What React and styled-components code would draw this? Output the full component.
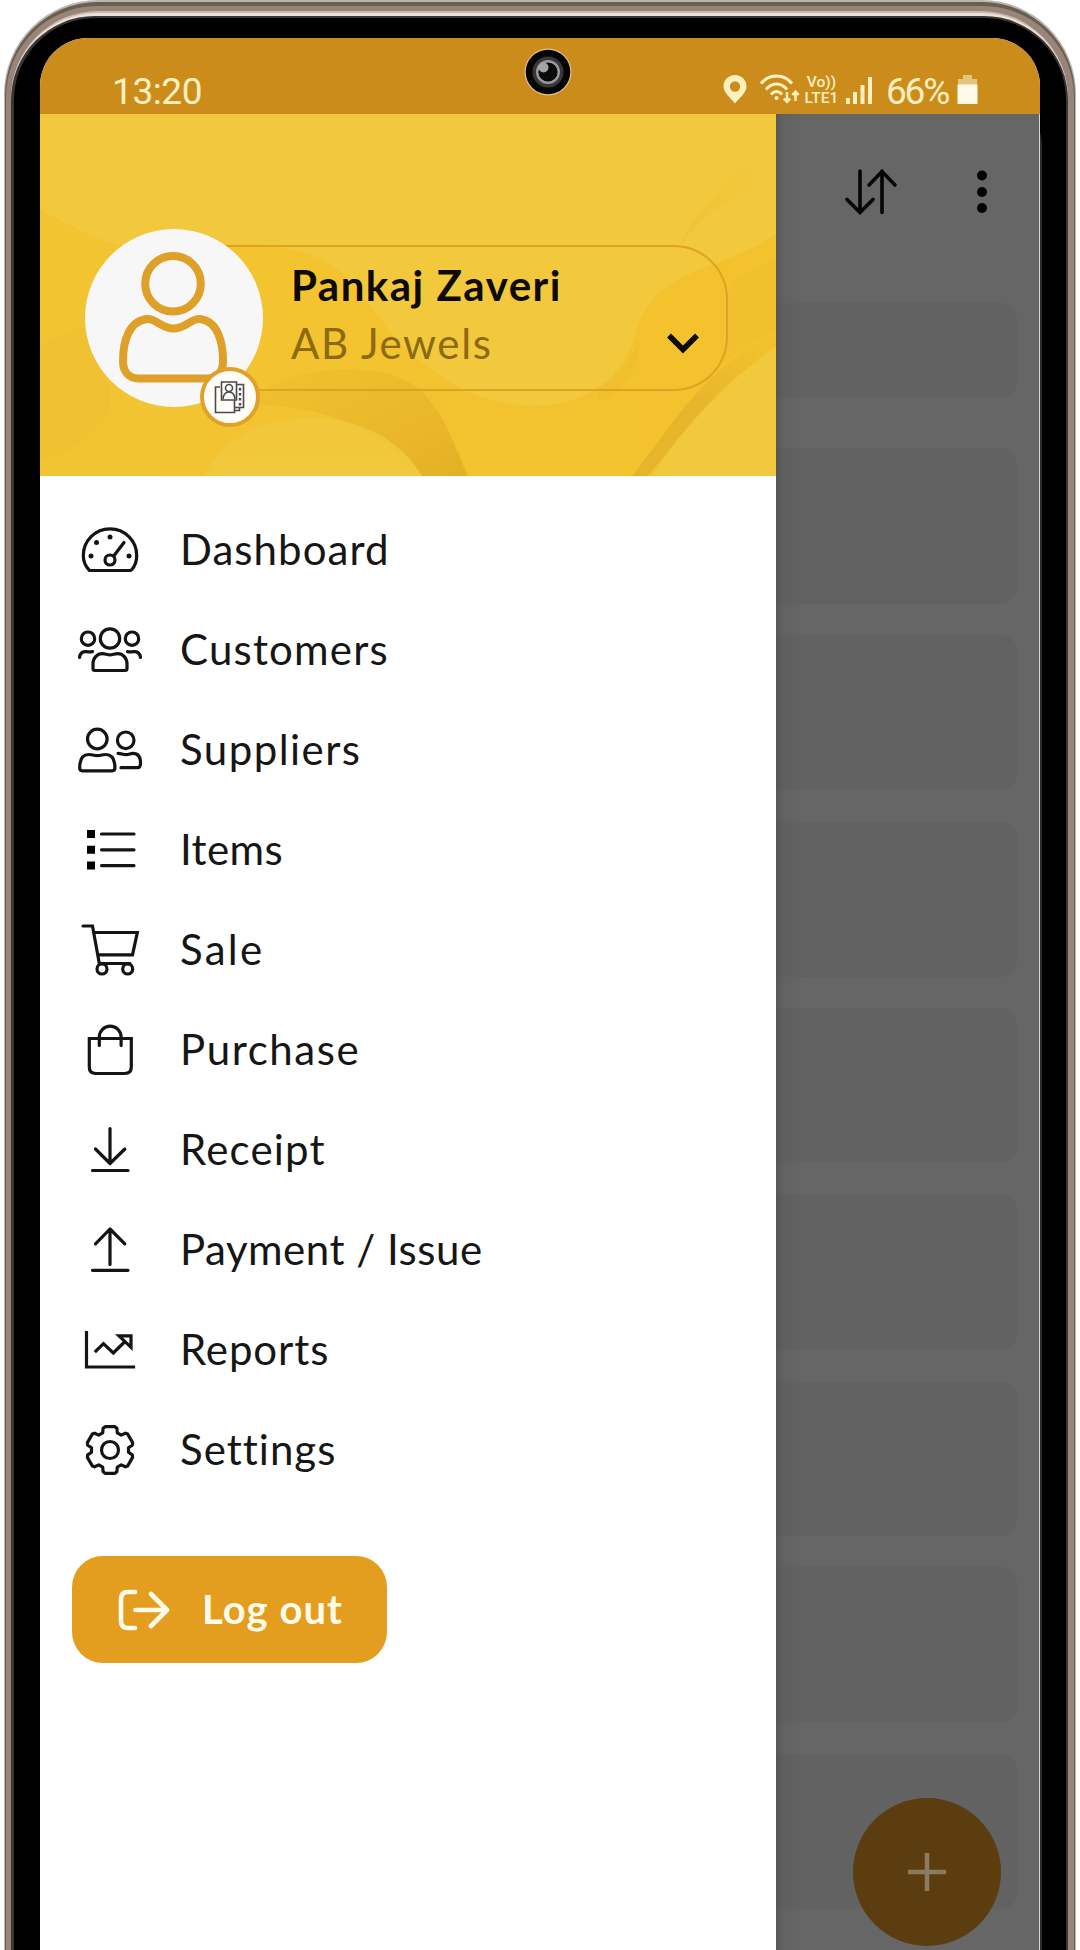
import React from 'react';
import styled, { createGlobalStyle } from 'styled-components';

const GlobalStyle = createGlobalStyle`
  * { box-sizing: border-box; }
  html, body { margin: 0; background: #fff; }
  body { width: 1080px; height: 1950px; overflow: hidden; }
`;

const Page = styled.div`
  width: 1080px;
  height: 1950px;
  padding: 0 4px;
  overflow: hidden;
  font-family: Lato, 'Open Sans', sans-serif;
`;

const Ring = styled.div`
  height: 100%;
  background: ${(p) => p.$tone};
  padding: ${(p) => p.$pad};
  border-radius: ${(p) => p.$radius}px ${(p) => p.$radius}px 0 0;
`;

const Screen = styled.div`
  position: relative;
  display: flex;
  flex-direction: column;
  height: 100%;
  overflow: hidden;
  background: #fff;
  border-radius: 48px 48px 0 0;
  box-shadow: 2px 60px 0 0 #2e2e2e;
`;

const StatusBar = styled.header`
  flex: none;
  display: flex;
  justify-content: space-between;
  height: 76px;
  padding: 34px 62px 0 72px;
  background: #cc8c1c;
  color: #fff0c0;
  font-family: Roboto, sans-serif;
`;

const Clock = styled.span`
  font-size: 37px;
  line-height: 40px;
  letter-spacing: -0.4px;
`;

const StatusIcons = styled.div`
  display: flex;
  align-items: flex-start;
`;

const StatusGlyph = styled.svg`
  display: block;
  flex: none;
  margin-right: ${(p) => p.$gap || 0}px;
`;

const Network = styled.div`
  display: flex;
  flex-direction: column;
  align-items: center;
  width: 37px;
  margin: 2px 6px 0 3px;
  font-size: 15.5px;
  font-weight: 500;
  line-height: 16px;
  letter-spacing: 0.1px;
  white-space: nowrap;
`;

const Charge = styled.span`
  width: 72px;
  padding-left: 1px;
  font-size: 37px;
  line-height: 40px;
  letter-spacing: -2.2px;
`;

const Camera = styled.svg`
  position: absolute;
  left: 483px;
  top: 9px;
`;

const Body = styled.div`
  flex: 1;
  display: flex;
  min-height: 0;
`;

const Drawer = styled.nav`
  flex: none;
  width: 736px;
  background: #fff;
`;

const Profile = styled.section`
  position: relative;
  height: 362px;
  padding: 115px 0 0 45px;
  background: #f2c83c;
`;

const Waves = styled.svg`
  position: absolute;
  inset: 0;
`;

const ProfileRow = styled.div`
  position: relative;
  display: flex;
  align-items: flex-start;
`;

const Avatar = styled.div`
  position: relative;
  z-index: 1;
  flex: none;
  width: 178px;
  height: 178px;
  border-radius: 50%;
  background: #f7f7f7;
`;

const Badge = styled.div`
  position: absolute;
  left: 115px;
  top: 138px;
  display: flex;
  align-items: center;
  justify-content: center;
  width: 60px;
  height: 60px;
  border: 4px solid #e2a02a;
  border-radius: 50%;
  background: #fffdf8;
`;

const Account = styled.div`
  display: flex;
  align-items: flex-start;
  justify-content: space-between;
  width: 554px;
  height: 146px;
  margin: 16px 0 0 -89px;
  padding: 14px 26px 0 117px;
  border: 2px solid #dea324;
  border-left: 0;
  border-radius: 0 54px 54px 0;
`;

const UserName = styled.div`
  height: 48px;
  color: #0d0a06;
  font-size: 42px;
  font-weight: 700;
  line-height: 48px;
  letter-spacing: 1.5px;
  white-space: nowrap;
`;

const Company = styled.div`
  margin-top: 10px;
  color: #8c6a12;
  font-size: 42px;
  line-height: 48px;
  letter-spacing: 1.6px;
  white-space: nowrap;
`;

const Chevron = styled.svg`
  flex: none;
  margin-top: 64px;
`;

const Menu = styled.ul`
  margin: 0;
  padding: 24px 0 0 30px;
  list-style: none;
`;

const MenuItem = styled.li`
  display: flex;
  align-items: center;
  gap: 30px;
  height: 100px;
`;

const MenuIcon = styled.svg`
  flex: none;
  display: block;
  fill: none;
  stroke: #141414;
  stroke-width: 3.2;
  stroke-linecap: round;
  stroke-linejoin: round;
`;

const MenuLabel = styled.span`
  padding-bottom: 3px;
  color: #161616;
  font-size: 42px;
  line-height: 50px;
  letter-spacing: ${(p) => p.$track}px;
  white-space: nowrap;
`;

const Logout = styled.button`
  display: flex;
  align-items: center;
  gap: 32px;
  width: 315px;
  height: 107px;
  margin: 56px 0 0 32px;
  padding: 0 0 0 45px;
  border: 0;
  border-radius: 31px;
  background: #e49e1f;
  color: #fffbea;
  font-family: inherit;
  font-size: 40px;
  font-weight: 700;
  letter-spacing: 1px;

  span {
    padding-bottom: 2px;
  }
`;

const Backdrop = styled.main`
  position: relative;
  flex: 1;
  background: linear-gradient(90deg, #585858 0, #626262 8px, #666 28px);
  border-right: 1px solid #d6d6d6;
`;

const Toolbar = styled.div`
  display: flex;
  align-items: center;
  justify-content: space-between;
  height: 189px;
  padding: 0 47px 34px 68px;
`;

const Cards = styled.div`
  display: flex;
  flex-direction: column;
  gap: 31px;
`;

const Card = styled.div`
  flex: none;
  width: 241px;
  height: ${(p) => p.$height}px;
  margin-bottom: ${(p) => p.$after || 0}px;
  border-radius: 0 16px 16px 0;
  background: linear-gradient(90deg, #565656 0, #5f5f5f 8px, #626262 28px);
`;

const AddButton = styled.button`
  position: absolute;
  left: 77px;
  top: 1684px;
  display: flex;
  align-items: center;
  justify-content: center;
  width: 148px;
  height: 148px;
  padding: 0;
  border: 0;
  border-radius: 50%;
  background: #5c3d0f;
`;

const rad = (deg) => (deg * Math.PI) / 180;
const gearPath = () => {
  const pts = [];
  for (let k = 0; k < 6; k += 1) {
    const a = -90 + 60 * k;
    [[-23, 18.6], [-17.5, 22.8], [-12, 23.8], [12, 23.8], [17.5, 22.8], [23, 18.6]].forEach(([d, r]) => {
      pts.push(`${(40 + r * Math.cos(rad(a + d))).toFixed(1)} ${(40 + r * Math.sin(rad(a + d))).toFixed(1)}`);
    });
  }
  return `M${pts.join('L')}Z`;
};

const ITEMS = [
  {
    label: 'Dashboard',
    track: 1.05,
    art: (
      <>
        <path d="M19.5 60.5C15 56 13.3 51 13.3 45.5a26.7 26.7 0 0 1 53.4 0c0 5.500-1.700 10.500-5 14.200q-.7.800-2 .8H20.500z" />
        <circle cx="40" cy="50" r="5" />
        <path d="M43.700 46 54 32.500" />
        <g fill="#141414" stroke="none">
          <circle cx="21" cy="46" r="2.500" />
          <circle cx="26.500" cy="32.600" r="2.500" />
          <circle cx="40" cy="27" r="2.500" />
          <circle cx="59" cy="46" r="2.500" />
        </g>
      </>
    ),
  },
  {
    label: 'Customers',
    track: 1.2,
    art: (
      <>
        <circle cx="40" cy="28.500" r="9.700" />
        <circle cx="18" cy="28.700" r="6.700" />
        <circle cx="62" cy="28.700" r="6.700" />
        <path d="M25 60.500c-1.500 0-2-.700-2-2V54c0-6 4-10.300 9.500-10.300 3 0 4.500 1.100 7.500 1.100s4.500-1.100 7.500-1.100C53 43.700 57 48 57 54v4.500c0 1.300-.5 2-2 2z" />
        <path d="M9.500 47.500C10 43 13 41 17 41.700c2 .3 3.500.3 5.500-.1M70.500 47.500C70 43 67 41 63 41.700c-2 .3-3.500.3-5.500-.1" />
      </>
    ),
  },
  {
    label: 'Suppliers',
    track: 1.45,
    art: (
      <>
        <circle cx="27.300" cy="29" r="9.800" />
        <circle cx="55.700" cy="30.300" r="8.300" />
        <path d="M12.500 60.800c-2 0-2.800-1-2.800-2.800 0-8 2.500-13.500 9-13.500 3.500 0 5 1.100 8.600 1.100s5.100-1.100 8.600-1.100c6.500 0 9 5.500 9 13.500 0 1.800-.8 2.800-2.800 2.800z" />
        <path d="M48 43.300c3.500 0 4.500 1.400 8 1.400 3 0 4.500-1.400 7-1.400 5 0 7.500 3.700 7.500 9.700 0 3-.5 4.700-3 4.700H51" />
      </>
    ),
  },
  {
    label: 'Items',
    track: 0.4,
    art: (
      <>
        <path d="M31.500 24H64M31.500 39.800H64M31.500 55.600H64" />
        <path fill="#000" stroke="none" d="M17 20h8v8h-8zM17 35.800h8v8h-8zM17 51.600h8v8h-8z" />
      </>
    ),
  },
  {
    label: 'Sale',
    track: 2.2,
    art: (
      <>
        <path strokeLinejoin="miter" d="M13 16h9.500l6.800 37.500H60M23.700 22.500h43.600l-4.800 22.300H28" />
        <circle cx="32" cy="59" r="5" />
        <circle cx="57.700" cy="59" r="5" />
      </>
    ),
  },
  {
    label: 'Purchase',
    track: 1.6,
    art: (
      <>
        <path strokeLinejoin="miter" d="M19.300 28.500h42V57q0 6.500-6.500 6.500h-29q-6.500 0-6.500-6.500z" />
        <path d="M29.300 35.500v-8.500a10.900 10.900 0 0 1 21.800 0v8.500" />
      </>
    ),
  },
  {
    label: 'Receipt',
    track: 1.2,
    art: <path d="M40 18.500V53M25.500 39 40 53.500 54.800 39M22.500 60.500H58" />,
  },
  {
    label: 'Payment / Issue',
    track: 0.5,
    art: <path d="M40 54.500V19M25.500 33.800 40 19l14.800 14.800M22.500 60.300H58" />,
  },
  {
    label: 'Reports',
    track: 0.9,
    art: (
      <path strokeLinecap="square" strokeLinejoin="miter" d="M16.500 22.500V57H63.500M26 41l7.500-7.300 9.800 9.300L54.500 32M49 25.800h12v11.500z" />
    ),
  },
  {
    label: 'Settings',
    track: 1,
    art: (
      <>
        <path d={gearPath()} />
        <circle cx="40" cy="40" r="8.500" />
      </>
    ),
  },
];

const CARD_COUNT = 8;

function HeaderWaves() {
  return (
    <Waves width="736" height="362" viewBox="0 0 736 362">
      <defs>
        <linearGradient id="fold" x1="0" y1="0" x2="1" y2="1">
          <stop offset="0" stopColor="#ebbb2c" stopOpacity=".3" />
          <stop offset="1" stopColor="#dda820" stopOpacity=".7" />
        </linearGradient>
        <linearGradient id="sheen" x1="0" y1="0" x2="1" y2="0">
          <stop offset="0" stopColor="#f3c432" />
          <stop offset="1" stopColor="#f3c22d" />
        </linearGradient>
        <linearGradient id="bubble" x1="0" y1="0" x2="0" y2="1">
          <stop offset="0" stopColor="#f2c83c" stopOpacity=".8" />
          <stop offset="1" stopColor="#f2c83c" />
        </linearGradient>
        <linearGradient id="ribbon" x1="1" y1="0" x2="0" y2="1">
          <stop offset="0" stopColor="#e9b92f" stopOpacity="0" />
          <stop offset=".5" stopColor="#e2b129" stopOpacity=".7" />
          <stop offset="1" stopColor="#e2b129" stopOpacity=".8" />
        </linearGradient>
        <linearGradient id="edge" x1="0" y1="0" x2="1" y2="0">
          <stop offset="0" stopColor="#ecbd30" stopOpacity=".55" />
          <stop offset="1" stopColor="#f3c838" stopOpacity="0" />
        </linearGradient>
      </defs>
      <path fill="url(#sheen)" d="M0 95C40 118 75 136 120 136 180 126 250 126 290 150 330 178 345 225 385 250 440 300 560 320 594 225 612 150 680 160 736 120V362H0Z" />
      <path fill="#eebf30" opacity=".45" d="M0 230C30 218 45 212 70 205V300C45 330 20 345 0 345Z" />
      <path fill="url(#fold)" d="M205 290C240 255 310 248 355 262 395 275 408 315 428 362H375C340 305 260 290 205 290Z" />
      <path fill="url(#bubble)" d="M165 362C190 295 330 275 382 362Z" />
      <path fill="#eebd2f" opacity=".7" d="M555 275C580 262 592 245 600 225 598 255 588 275 560 287Z" />
      <path fill="#f2c83c" d="M612 362C650 305 680 275 736 232V362Z" />
      <path fill="url(#ribbon)" d="M592 362C635 310 655 262 736 218V232C680 270 650 310 608 362Z" />
      <path fill="url(#edge)" d="M640 132C655 90 700 70 736 10V60C700 80 660 100 640 132Z" />
      <path fill="#ecbc2f" opacity=".25" d="M690 170C705 160 720 150 736 145V215C720 222 700 235 684 246Z" />
    </Waves>
  );
}

export default function App() {
  return (
    <>
      <GlobalStyle />
      <Page>
        <Ring $tone="#b9b6b2" $pad="2px 1px 0" $radius={94}>
          <Ring $tone="#6b5e4f" $pad="4px 1px 0" $radius={93}>
            <Ring $tone="#98857a" $pad="5px 6px 0 5px" $radius={91}>
              <Ring $tone="#cdb9aa" $pad="2px 0 0" $radius={87}>
                <Ring $tone="#eee2d8" $pad="3px 0 0" $radius={86}>
                  <Ring $tone="#393634" $pad="2px 2px 0 3px" $radius={84}>
                    <Ring $tone="#000" $pad="20px 26px 0 26px" $radius={82}>
                      <Screen>
                        <StatusBar>
                          <Clock>13:20</Clock>
                          <StatusIcons>
                            <StatusGlyph width="24" height="34" $gap={13} viewBox="0 0 24 34">
                              <path fill="currentColor" fillRule="evenodd" d="M12 3C5.500 3 .500 8 .500 14.200.500 21 8 26 12 31.500 16 26 23.500 21 23.500 14.200 23.500 8 18.500 3 12 3Zm0 6.300a5.200 5.200 0 1 1 0 10.400 5.200 5.200 0 0 1 0-10.400Z" />
                            </StatusGlyph>
                            <StatusGlyph width="40" height="34" viewBox="0 0 40 34" fill="none" stroke="currentColor" strokeWidth="3">
                              <path d="M1 11.500C9 1.500 24 1.500 32 11.500M6 17.500C12 10 21 10 27 17.500M11 22.500C14.500 18.500 18.500 18.500 22 22.500" />
                              <circle cx="16.500" cy="26" r="2" fill="currentColor" stroke="none" />
                              <path strokeWidth="2.500" d="M27 20v10M23.800 26.500 27 30l3.200-3.500M35.500 29V19.500M32.300 23l3.200-3.500 3.200 3.500" />
                            </StatusGlyph>
                            <Network>
                              <span>Vo))</span>
                              <span>LTE1</span>
                            </Network>
                            <StatusGlyph width="27" height="34" $gap={12} viewBox="0 0 27 34">
                              <path fill="currentColor" d="M0 26h4v6H0zM7 20h4v12H7zM14.500 13h4v19h-4zM22 5h4v27h-4z" />
                            </StatusGlyph>
                            <Charge>66%</Charge>
                            <StatusGlyph width="21" height="34" viewBox="0 0 21 34">
                              <path fill="#e3c684" d="M6 3h9v4h5v6H1V7h5z" />
                              <path fill="#fffbe8" d="M.500 12.500h20V32H.500z" />
                            </StatusGlyph>
                          </StatusIcons>
                        </StatusBar>
                        <Body>
                          <Drawer>
                            <Profile>
                              <HeaderWaves />
                              <ProfileRow>
                                <Avatar>
                                  <svg width="178" height="178" viewBox="0 0 178 178" fill="none" stroke="#dfa02a" strokeWidth="8">
                                    <circle cx="88" cy="54.700" r="27.800" />
                                    <path strokeLinejoin="round" d="M62 90c9-1 14 9.500 26.500 9.500S106 89 115 90c18 2 23 24 23 42 0 12-6 17.500-16 17.500H54c-10 0-16-6.500-16-17.500C38 112 44 92 62 90Z" />
                                  </svg>
                                  <Badge>
                                    <svg width="34" height="36" viewBox="0 0 34 36" fill="none" stroke="#4a4a4a" strokeWidth="1.600">
                                      <path d="M7 8H2.500v25.500h19V21M8.500 21V3h15v18zM23.500 5.500h7v23h-9M21.500 31.500h5v-3" />
                                      <circle cx="16" cy="9" r="3.500" />
                                      <path d="M10 20c.5-5 2.500-7 6-7s5.500 2 6 7" />
                                      <path strokeWidth="2.400" strokeDasharray="2.500 2.500" d="M27 9v18" />
                                    </svg>
                                  </Badge>
                                </Avatar>
                                <Account>
                                  <div>
                                    <UserName>Pankaj Zaveri</UserName>
                                    <Company>AB Jewels</Company>
                                  </div>
                                  <Chevron width="34" height="34" viewBox="0 0 34 34" fill="none" stroke="#0d0a06" strokeWidth="5.500">
                                    <path d="m3 10.500 14 14 14-14" />
                                  </Chevron>
                                </Account>
                              </ProfileRow>
                            </Profile>
                            <Menu>
                              {ITEMS.map((item) => (
                                <MenuItem key={item.label}>
                                  <MenuIcon width="80" height="80" viewBox="0 0 80 80">{item.art}</MenuIcon>
                                  <MenuLabel $track={item.track}>{item.label}</MenuLabel>
                                </MenuItem>
                              ))}
                            </Menu>
                            <Logout>
                              <svg width="53" height="42" viewBox="0 0 53 42" fill="none" stroke="currentColor" strokeWidth="4.600" strokeLinecap="round" strokeLinejoin="round">
                                <path d="M18 3h-7q-7 0-7 7v22q0 7 7 7h7M18.500 21H49M34 5l16 16-16 16" />
                              </svg>
                              <span>Log out</span>
                            </Logout>
                          </Drawer>
                          <Backdrop>
                            <Toolbar>
                              <svg width="56" height="50" viewBox="0 0 56 50" fill="none" stroke="#050505" strokeWidth="3.600" strokeLinecap="round">
                                <path d="M16 4v41M3 32.500 16 45.500l13-13M38 45.500V4M25 18l13-13.500L51 18" />
                              </svg>
                              <svg width="20" height="50" viewBox="0 0 20 50">
                                <circle cx="10" cy="8.500" r="5" />
                                <circle cx="10" cy="25" r="5" />
                                <circle cx="10" cy="41" r="5" />
                              </svg>
                            </Toolbar>
                            <Cards>
                              <Card $height={95} $after={19} />
                              {Array.from({ length: CARD_COUNT }, (_, i) => (
                                <Card key={i} $height={155.5} />
                              ))}
                            </Cards>
                            <AddButton aria-label="Add">
                              <svg width="40" height="40" viewBox="0 0 40 40" stroke="#8b7b62" strokeWidth="4.500">
                                <path d="M20 1v38M1 20h38" />
                              </svg>
                            </AddButton>
                          </Backdrop>
                        </Body>
                        <Camera width="50" height="50" viewBox="0 0 50 50">
                          <circle cx="25" cy="25" r="23.500" fill="#dfc39a" />
                          <circle cx="25" cy="25" r="22.300" fill="#050505" />
                          <circle cx="25" cy="25" r="15.500" fill="#383838" />
                          <circle cx="25" cy="25" r="10.800" fill="#0a0a0a" stroke="#9a9a9a" strokeWidth="2.400" />
                          <circle cx="20.500" cy="20.500" r="5" fill="#a5a5a5" />
                        </Camera>
                      </Screen>
                    </Ring>
                  </Ring>
                </Ring>
              </Ring>
            </Ring>
          </Ring>
        </Ring>
      </Page>
    </>
  );
}
